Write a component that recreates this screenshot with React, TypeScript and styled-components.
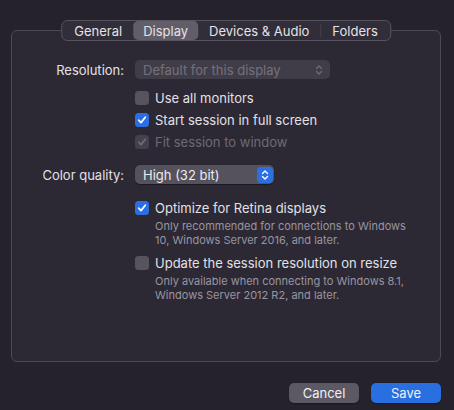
import React from "react";
import styled, { createGlobalStyle } from "styled-components";

const Global = createGlobalStyle`
  html, body { margin: 0; padding: 0; background: #26222c; }
  body { font-family: Inter, "Liberation Sans", sans-serif; -webkit-font-smoothing: antialiased; }
`;

const Window = styled.div`
  width: 454px;
  height: 410px;
  box-sizing: border-box;
  background: #26222c;
  padding: 30px 13px 0 11px;
  display: flex;
  flex-direction: column;
  font-size: 13px;
  color: #e2e0e6;
`;

const Panel = styled.div`
  position: relative;
  height: 332px;
  box-sizing: border-box;
  border: 1px solid #4d4955;
  border-radius: 6px;
  background: #2d2934;
  padding: 29px 0 0 0;
  display: flex;
  flex-direction: column;
`;

const TabBar = styled.div`
  position: absolute;
  top: -11px;
  left: 50%;
  transform: translateX(-50%);
  height: 21px;
  box-sizing: border-box;
  border: 1px solid #57535e;
  border-radius: 6px;
  background: #322e39;
  display: flex;
  align-items: center;
  padding: 0 1px;
`;

const Tab = styled.div<{ $active?: boolean }>`
  height: 19px;
  display: flex;
  align-items: center;
  padding: 0 ${(p) => (p.$active ? "10px" : "11px")};
  border-radius: 5px;
  background: ${(p) => (p.$active ? "#625e69" : "transparent")};
  color: #e4e2e8;
  font-size: 13px;
  white-space: nowrap;
`;

const TabSep = styled.div`
  width: 1px;
  height: 13px;
  background: #46424d;
`;

const Row = styled.div<{ $h: number; $mt?: number }>`
  display: grid;
  grid-template-columns: 112px 1fr;
  column-gap: 11px;
  align-items: center;
  height: ${(p) => p.$h}px;
  margin-top: ${(p) => p.$mt ?? 0}px;
`;

const Label = styled.div`
  text-align: right;
  color: #e2e0e6;
`;

const Popup = styled.div<{ $w: number; $disabled?: boolean }>`
  width: ${(p) => p.$w}px;
  height: 19px;
  box-sizing: border-box;
  border-radius: 5px;
  background: ${(p) => (p.$disabled ? "#413d48" : "#56525d")};
  color: ${(p) => (p.$disabled ? "#75717c" : "#ecebef")};
  display: flex;
  align-items: center;
  justify-content: space-between;
  padding: 0 1px 0 8px;
  box-shadow: ${(p) => (p.$disabled ? "none" : "0 0.5px 1px rgba(0,0,0,0.4)")};
`;

const Stepper = styled.div<{ $blue?: boolean }>`
  width: 16px;
  height: 16px;
  border-radius: 4px;
  background: ${(p) => (p.$blue ? "#2c6fe3" : "transparent")};
  display: flex;
  align-items: center;
  justify-content: center;
  margin-right: ${(p) => (p.$blue ? "0" : "2px")};
`;

const CheckRow = styled.div<{ $disabled?: boolean }>`
  display: flex;
  align-items: center;
  gap: 6px;
  color: ${(p) => (p.$disabled ? "#6d6975" : "#e2e0e6")};
`;

const Box = styled.div<{ $state: "off" | "on" | "dim" }>`
  width: 14px;
  height: 14px;
  box-sizing: border-box;
  border-radius: 3.5px;
  display: flex;
  align-items: center;
  justify-content: center;
  background: ${(p) =>
    p.$state === "on" ? "#2b6fe2" : p.$state === "dim" ? "#45414c" : "#58545f"};
`;

const Note = styled.div`
  font-size: 11px;
  line-height: 14px;
  color: #9995a0;
  padding-left: 20px;
`;

const NoteBlock = styled.div`
  display: grid;
  grid-template-columns: 112px 1fr;
  column-gap: 11px;
`;

const Footer = styled.div`
  display: flex;
  justify-content: flex-end;
  gap: 12px;
  margin-top: 21px;
`;

const Button = styled.div<{ $primary?: boolean }>`
  width: 70px;
  height: 20px;
  border-radius: 5px;
  display: flex;
  align-items: center;
  justify-content: center;
  background: ${(p) => (p.$primary ? "#2a6fdf" : "#5d5964")};
  color: #f1f0f3;
  font-size: 13px;
  box-shadow: 0 0.5px 1px rgba(0, 0, 0, 0.35);
`;

const Check = ({ color }: { color: string }) => (
  <svg width="10" height="10" viewBox="0 0 10 10">
    <path d="M1.8 5.2 L4 7.6 L8.3 2.2" fill="none" stroke={color} strokeWidth="1.7" strokeLinecap="round" strokeLinejoin="round" />
  </svg>
);

const Chevrons = ({ color }: { color: string }) => (
  <svg width="8" height="12" viewBox="0 0 8 12">
    <path d="M1.5 4.5 L4 2 L6.5 4.5 M1.5 7.5 L4 10 L6.5 7.5" fill="none" stroke={color} strokeWidth="1.4" strokeLinecap="round" strokeLinejoin="round" />
  </svg>
);

const Checkbox = ({ state, label, disabled }: { state: "off" | "on" | "dim"; label: string; disabled?: boolean }) => (
  <CheckRow $disabled={disabled}>
    <Box $state={state}>
      {state === "on" && <Check color="#ffffff" />}
      {state === "dim" && <Check color="#6f6b76" />}
    </Box>
    {label}
  </CheckRow>
);

export default function App() {
  return (
    <Window>
      <Global />
      <Panel>
        <TabBar>
          <Tab>General</Tab>
          <Tab $active>Display</Tab>
          <Tab>Devices &amp; Audio</Tab>
          <TabSep />
          <Tab>Folders</Tab>
        </TabBar>

        <Row $h={19}>
          <Label>Resolution:</Label>
          <Popup $w={195} $disabled>
            Default for this display
            <Stepper>
              <Chevrons color="#6e6a75" />
            </Stepper>
          </Popup>
        </Row>
        <Row $h={22} $mt={8}>
          <span />
          <Checkbox state="off" label="Use all monitors" />
        </Row>
        <Row $h={22}>
          <span />
          <Checkbox state="on" label="Start session in full screen" />
        </Row>
        <Row $h={22}>
          <span />
          <Checkbox state="dim" label="Fit session to window" disabled />
        </Row>

        <Row $h={19} $mt={12}>
          <Label>Color quality:</Label>
          <Popup $w={139}>
            High (32 bit)
            <Stepper $blue>
              <Chevrons color="#ffffff" />
            </Stepper>
          </Popup>
        </Row>

        <Row $h={22} $mt={13}>
          <span />
          <Checkbox state="on" label="Optimize for Retina displays" />
        </Row>
        <NoteBlock>
          <span />
          <Note>
            Only recommended for connections to Windows
            <br />
            10, Windows Server 2016, and later.
          </Note>
        </NoteBlock>

        <Row $h={22} $mt={5}>
          <span />
          <Checkbox state="off" label="Update the session resolution on resize" />
        </Row>
        <NoteBlock>
          <span />
          <Note>
            Only available when connecting to Windows 8.1,
            <br />
            Windows Server 2012 R2, and later.
          </Note>
        </NoteBlock>
      </Panel>
      <Footer>
        <Button>Cancel</Button>
        <Button $primary>Save</Button>
      </Footer>
    </Window>
  );
}
